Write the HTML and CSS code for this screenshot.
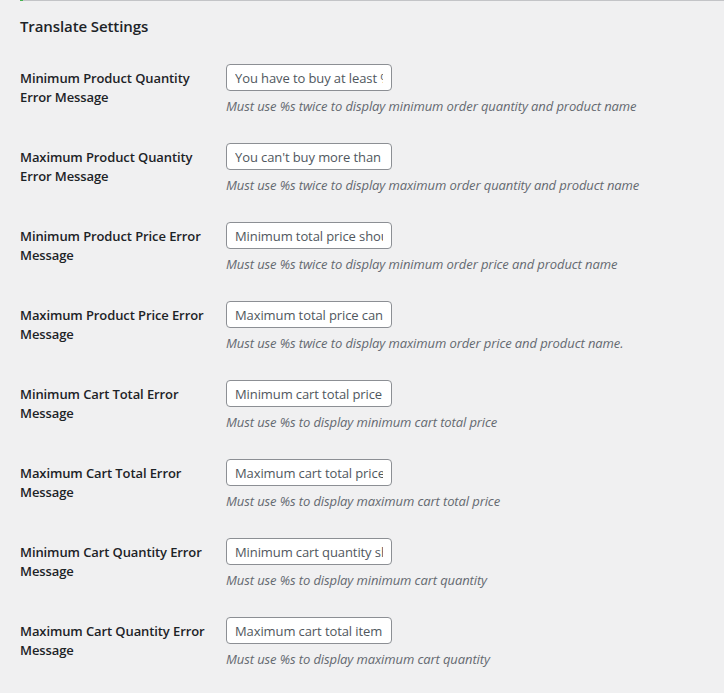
FILE: index.html
```html
<!DOCTYPE html>
<html lang="en">
<head>
    <meta charset="UTF-8">
    <meta name="viewport" content="width=device-width, initial-scale=1.0">
    <title>Translate Settings</title>
    <link rel="stylesheet" href="styles.css">
</head>
<body>

    <div class="top-border"></div>

    <div class="wrap">
        <h2 class="section-title">Translate Settings</h2>

        <div class="form-table">
            <div class="form-row">
                <label class="row-label">Minimum Product Quantity Error Message</label>
                <div class="row-field">
                    <input type="text" class="regular-text" value="You have to buy at least %s quantities of %s">
                    <p class="description">Must use %s twice to display minimum order quantity and product name</p>
                </div>
            </div>

            <div class="form-row">
                <label class="row-label">Maximum Product Quantity Error Message</label>
                <div class="row-field">
                    <input type="text" class="regular-text" value="You can't buy more than %s quantities of %s">
                    <p class="description">Must use %s twice to display maximum order quantity and product name</p>
                </div>
            </div>

            <div class="form-row">
                <label class="row-label">Minimum Product Price Error Message</label>
                <div class="row-field">
                    <input type="text" class="regular-text" value="Minimum total price should be %s or more for %s">
                    <p class="description">Must use %s twice to display minimum order price and product name</p>
                </div>
            </div>

            <div class="form-row">
                <label class="row-label">Maximum Product Price Error Message</label>
                <div class="row-field">
                    <input type="text" class="regular-text" value="Maximum total price can not be more than %s for %s">
                    <p class="description">Must use %s twice to display maximum order price and product name.</p>
                </div>
            </div>

            <div class="form-row">
                <label class="row-label">Minimum Cart Total Error Message</label>
                <div class="row-field">
                    <input type="text" class="regular-text" value="Minimum cart total price should be %s or more">
                    <p class="description">Must use %s to display minimum cart total price</p>
                </div>
            </div>

            <div class="form-row">
                <label class="row-label">Maximum Cart Total Error Message</label>
                <div class="row-field">
                    <input type="text" class="regular-text" value="Maximum cart total price can not be more than %s">
                    <p class="description">Must use %s to display maximum cart total price</p>
                </div>
            </div>

            <div class="form-row">
                <label class="row-label">Minimum Cart Quantity Error Message</label>
                <div class="row-field">
                    <input type="text" class="regular-text" value="Minimum cart quantity should be %s or more">
                    <p class="description">Must use %s to display minimum cart quantity</p>
                </div>
            </div>

            <div class="form-row">
                <label class="row-label">Maximum Cart Quantity Error Message</label>
                <div class="row-field">
                    <input type="text" class="regular-text" value="Maximum cart total item can not be more than %s">
                    <p class="description">Must use %s to display maximum cart quantity</p>
                </div>
            </div>
        </div>
    </div>

</body>
</html>
```

FILE: styles.css
```css
/* Page base */
body {
    margin: 0;
    padding: 0;
    background-color: #f0f0f1;
    color: #1d2327;
    font-family: "Open Sans", "Noto Sans", sans-serif;
    font-size: 13px;
    line-height: 1.4;
    letter-spacing: -0.1px;
}

/* Thin line left over from the tab bar above */
.top-border {
    margin-left: 20px;
    height: 1px;
    background: linear-gradient(to right, #46b450 0, #46b450 3px, #c3c4c7 3px);
}

.wrap {
    padding: 0 20px;
}

.section-title {
    margin: 15px 0 0;
    font-size: 15px;
    font-weight: 600;
    line-height: 20px;
    letter-spacing: -0.1px;
    color: #1d2327;
}

.form-table {
    margin-top: 14px;
}

.form-row {
    display: flex;
    padding-bottom: 13px;
}

.row-label {
    width: 200px;
    flex-shrink: 0;
    padding: 19px 6px 0 0;
    font-weight: 600;
    line-height: 19px;
}

.row-field {
    padding-top: 14px;
}

/* Text inputs */
.regular-text {
    display: block;
    width: 166px;
    height: 27px;
    box-sizing: border-box;
    margin: 0;
    padding: 0 8px;
    border: 1px solid #8c8f94;
    border-radius: 4px;
    background-color: #fff;
    color: #50575e;
    font-family: inherit;
    font-size: 13px;
    letter-spacing: inherit;
}

.description {
    margin: 6px 0 0;
    color: #646970;
    font-style: italic;
    line-height: 19px;
}
```
